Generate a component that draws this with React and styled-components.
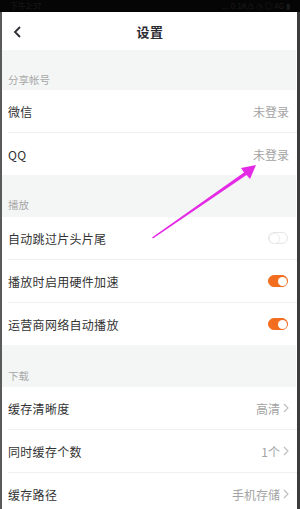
import styled, { createGlobalStyle } from "styled-components";

const Global = createGlobalStyle`
  html, body {
    margin: 0;
    padding: 0;
    background: #fff;
  }
  body {
    font-family: "Noto Sans CJK SC", "Noto Sans", sans-serif;
    -webkit-font-smoothing: antialiased;
  }
`;

const Screen = styled.div`
  position: relative;
  width: 300px;
  height: 509px;
  overflow: hidden;
  display: flex;
  flex-direction: column;
  background: #fff;
`;

const StatusBar = styled.div`
  height: 12px;
  flex: none;
  background: #050505;
  display: flex;
  align-items: center;
  justify-content: space-between;
  padding: 0 10px;
  font-size: 8px;
  line-height: 12px;
  color: #1b1b1b;
`;

const Frame = styled.div`
  flex: 1;
  display: flex;
  flex-direction: column;
  border-left: 2px solid #5a5a5a;
  border-right: 3px solid #3c3c3c;
  background: #fff;
`;

const Header = styled.div`
  position: relative;
  height: 38px;
  flex: none;
  display: flex;
  align-items: center;
  justify-content: center;
`;

const BackButton = styled.div`
  position: absolute;
  left: 10px;
  top: 13px;
  width: 12px;
  height: 14px;
  display: flex;
`;

const Title = styled.div`
  font-size: 13px;
  font-weight: 700;
  color: #2b2b33;
  letter-spacing: 0.5px;
  margin-left: 1px;
`;

const SectionHeader = styled.div`
  height: ${({ $h }) => $h}px;
  flex: none;
  background: #f4f6f6;
  display: flex;
  align-items: flex-end;
  padding: 0 0 ${({ $pb }) => $pb}px 6px;
  margin-right: 1px;
  box-sizing: border-box;
  font-size: 10.5px;
  line-height: 14px;
  color: #a8a8a8;
`;

const Row = styled.div`
  height: 42px;
  flex: none;
  display: flex;
  align-items: center;
  justify-content: space-between;
  padding: 0 8px 0 6px;
  position: relative;
  &:not(:last-child)::after {
    content: "";
    position: absolute;
    left: 6px;
    right: 0;
    bottom: -1px;
    height: 1px;
    background: #efefef;
  }
  & + & {
    margin-top: 1px;
  }
`;

const Group = styled.div`
  display: flex;
  flex-direction: column;
  flex: none;
`;

const Label = styled.span`
  font-size: 12px;
  letter-spacing: 0.3px;
  color: #333;
`;

const Value = styled.span`
  display: flex;
  align-items: center;
  gap: 3px;
  font-size: 12px;
  color: #a3a3a3;
`;

const Toggle = styled.span`
  width: 20px;
  height: 12px;
  border-radius: 6px;
  box-sizing: border-box;
  background: ${({ $on }) => ($on ? "#f26d1e" : "#fff")};
  border: 1px solid ${({ $on }) => ($on ? "#f26d1e" : "#e6e6e6")};
  display: flex;
  align-items: center;
  justify-content: ${({ $on }) => ($on ? "flex-end" : "flex-start")};
  padding: 0 0.5px;
  margin-right: 1px;
`;

const Knob = styled.span`
  width: 9px;
  height: 9px;
  border-radius: 50%;
  background: #fff;
  box-shadow: ${({ $on }) => ($on ? "none" : "0 0 0 1px #ececec")};
`;

const Overlay = styled.svg`
  position: absolute;
  left: 0;
  top: 0;
  pointer-events: none;
`;

const Chevron = () => (
  <svg width="6" height="10" viewBox="0 0 6 10">
    <path d="M1 1l4 4-4 4" fill="none" stroke="#bdbdbd" strokeWidth="1.1" />
  </svg>
);

const sections = [
  {
    title: "分享帐号",
    h: 40,
    pb: 3,
    rows: [
      { label: "微信", value: "未登录" },
      { label: "QQ", value: "未登录" },
    ],
  },
  {
    title: "播放",
    h: 42,
    pb: 5,
    rows: [
      { label: "自动跳过片头片尾", toggle: false },
      { label: "播放时启用硬件加速", toggle: true },
      { label: "运营商网络自动播放", toggle: true },
    ],
  },
  {
    title: "下载",
    h: 42,
    pb: 4,
    rows: [
      { label: "缓存清晰度", value: "高清", arrow: true },
      { label: "同时缓存个数", value: "1个", arrow: true },
      { label: "缓存路径", value: "手机存储", arrow: true },
    ],
  },
];

export default function App() {
  return (
    <>
      <Global />
      <Screen>
        <StatusBar>
          <span>下午2:37</span>
          <span>... 0.1K/s ◷ ◎ 4G ▮</span>
        </StatusBar>
        <Frame>
          <Header>
            <BackButton>
              <svg width="12" height="14" viewBox="0 0 12 14">
                <path d="M8 2L3 7l5 5" fill="none" stroke="#2b2b33" strokeWidth="1.8" />
              </svg>
            </BackButton>
            <Title>设置</Title>
          </Header>
          {sections.map((s) => (
            <div key={s.title} style={{ display: "contents" }}>
              <SectionHeader $h={s.h} $pb={s.pb}>{s.title}</SectionHeader>
              <Group>
                {s.rows.map((r) => (
                  <Row key={r.label}>
                    <Label>{r.label}</Label>
                    {r.toggle !== undefined ? (
                      <Toggle $on={r.toggle}>
                        <Knob $on={r.toggle} />
                      </Toggle>
                    ) : (
                      <Value>
                        {r.value}
                        {r.arrow && <Chevron />}
                      </Value>
                    )}
                  </Row>
                ))}
              </Group>
            </div>
          ))}
        </Frame>
        <Overlay width="300" height="509" viewBox="0 0 300 509">
          <polygon
            points="152,237.5 244,172.5 241,168 256,165 250,179 246.5,175 153,238.5"
            fill="#e52ae6"
          />
        </Overlay>
      </Screen>
    </>
  );
}
